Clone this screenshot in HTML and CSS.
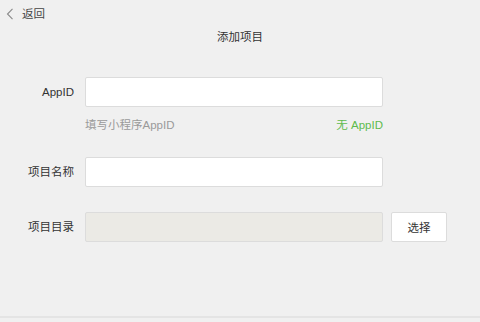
FILE: index.html
```html
<!DOCTYPE html>
<html lang="zh-CN">
<head>
    <meta charset="UTF-8">
    <title>添加项目</title>
    <link rel="stylesheet" href="styles.css">
</head>
<body>
    <div class="page">
        <div class="topbar">
            <svg class="back-icon" width="8" height="12" viewBox="0 0 8 12">
                <path d="M6.5 0.8 L1.5 6 L6.5 11.2" fill="none" stroke="#8a8a8a" stroke-width="1.1"/>
            </svg>
            <span class="back-text">返回</span>
        </div>
        <div class="page-title">添加项目</div>

        <div class="form">
            <div class="form-row">
                <label class="form-label">AppID</label>
                <input class="form-input" type="text">
            </div>
            <div class="form-hint">
                <span class="hint-text">填写小程序AppID</span>
                <span class="hint-link">无 AppID</span>
            </div>
            <div class="form-row row-name">
                <label class="form-label">项目名称</label>
                <input class="form-input" type="text">
            </div>
            <div class="form-row row-dir">
                <label class="form-label">项目目录</label>
                <input class="form-input disabled" type="text" disabled>
                <button class="btn-select">选择</button>
            </div>
        </div>

        <div class="footer-line"></div>
    </div>
</body>
</html>
```

FILE: styles.css
```css
html, body {
    margin: 0;
    padding: 0;
    height: 100%;
}

body {
    font-family: "Liberation Sans", "Noto Sans CJK SC", sans-serif;
    font-size: 11.5px;
    color: #333;
    background-color: #f0f0f0;
}

.page {
    height: 100%;
    display: flex;
    flex-direction: column;
}

.topbar {
    height: 27px;
    display: flex;
    align-items: center;
    padding-left: 6px;
}

.back-icon {
    display: block;
    margin-right: 8px;
}

.back-text {
    color: #444;
    line-height: 16px;
}

.page-title {
    text-align: center;
    line-height: 20px;
    height: 20px;
    color: #333;
}

.form {
    padding-top: 30px;
}

.form-row {
    display: flex;
    align-items: center;
}

.form-label {
    width: 74px;
    text-align: right;
    margin-right: 11px;
    color: #333;
    line-height: 16px;
}

.form-input {
    box-sizing: border-box;
    width: 298px;
    height: 30px;
    margin: 0;
    padding: 0 8px;
    border: 1px solid #dcdcdc;
    border-radius: 2px;
    background-color: #fff;
    outline: none;
}

.form-input.disabled {
    background-color: #ebeae5;
}

.form-hint {
    display: flex;
    justify-content: space-between;
    width: 298px;
    margin: 10px 0 0 85px;
    line-height: 16px;
}

.hint-text {
    color: #9a9a9a;
}

.hint-link {
    color: #5dbb4c;
}

.row-name {
    margin-top: 24px;
}

.row-dir {
    margin-top: 25px;
}

.btn-select {
    box-sizing: border-box;
    width: 56px;
    height: 30px;
    margin-left: 8px;
    border: 1px solid #dcdcdc;
    border-radius: 2px;
    background-color: #fff;
    font-family: "Noto Sans CJK SC", sans-serif;
    font-size: 11.5px;
    color: #333;
    padding: 0;
}

.footer-line {
    margin-top: auto;
    margin-bottom: 4px;
    height: 2px;
    background-color: #e4e4e4;
}
```
